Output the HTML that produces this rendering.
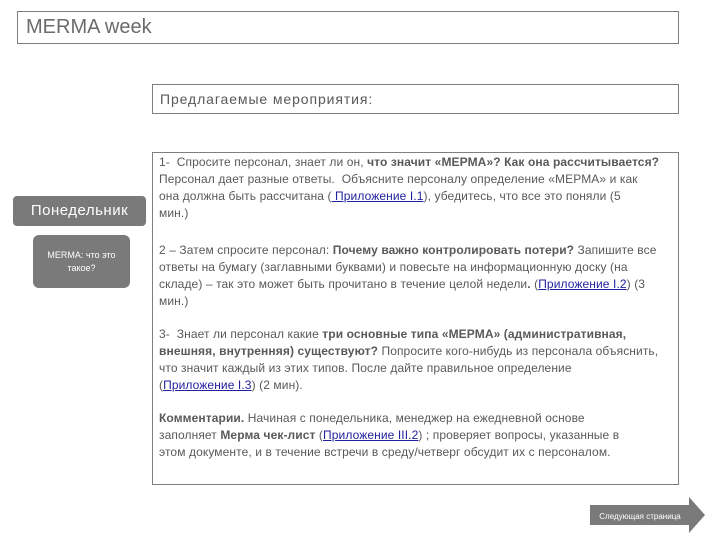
<!DOCTYPE html>
<html><head><meta charset="utf-8"><style>
body{margin:0;width:720px;height:540px;background:#fff;position:relative;overflow:hidden;font-family:"Liberation Sans","DejaVu Sans",sans-serif;color:#595959}
.box{position:absolute;border:1px solid #7f7f7f;box-sizing:border-box}
.t{position:absolute;left:159px;font-size:12px;line-height:17px;white-space:nowrap;letter-spacing:0.1px}
a{color:#1f1f9f;text-decoration:underline}
b{color:#595959}
</style></head><body>
<div class="box" style="left:17px;top:11px;width:662px;height:33px;font-size:20px;line-height:31px;padding-left:8px;color:#6b6b6b">MERMA week</div>
<div class="box" style="left:152px;top:84px;width:527px;height:30px;font-size:14px;line-height:28px;padding-left:7px;color:#595959;letter-spacing:0.9px">Предлагаемые мероприятия:</div>
<div class="box" style="left:152px;top:152px;width:527px;height:333px"></div>
<div style="position:absolute;left:13px;top:196px;width:133px;height:30px;background:#7a7a7a;border-radius:4px;color:#fff;font-size:15px;line-height:30px;text-align:center;letter-spacing:0.5px">Понедельник</div>
<div style="position:absolute;left:33px;top:235px;width:97px;height:53px;background:#7a7a7a;border-radius:6px;color:#fff;font-size:9px;line-height:13px;text-align:center;padding-top:14px;box-sizing:border-box">MERMA: что это<br>такое?</div>
<div class="t" style="top:154px">1- &nbsp;Спросите персонал, знает ли он, <b>что значит «МЕРМА»? Как она рассчитывается?</b><br>Персонал дает разные ответы. &nbsp;Объясните персоналу определение «МЕРМА» и как<br>она должна быть рассчитана (<a> Приложение I.1</a>), убедитесь, что все это поняли (5<br>мин.)</div>
<div class="t" style="top:242px">2 – Затем спросите персонал: <b>Почему важно контролировать потери?</b> Запишите все<br>ответы на бумагу (заглавными буквами) и повесьте на информационную доску (на<br>складе) – так это может быть прочитано в течение целой недели<b>.</b> (<a>Приложение I.2</a>) (3<br>мин.)</div>
<div class="t" style="top:326px">3- &nbsp;Знает ли персонал какие <b>три основные типа «МЕРМА» (административная,</b><br><b>внешняя, внутренняя) существуют?</b> Попросите кого-нибудь из персонала объяснить,<br>что значит каждый из этих типов. После дайте правильное определение<br>(<a>Приложение I.3</a>) (2 мин).</div>
<div class="t" style="top:410px"><b>Комментарии.</b> Начиная с понедельника, менеджер на ежедневной основе<br>заполняет <b>Мерма чек-лист</b> (<a>Приложение III.2</a>) ; проверяет вопросы, указанные в<br>этом документе, и в течение встречи в среду/четверг обсудит их с персоналом.</div>
<svg style="position:absolute;left:588px;top:496px" width="120" height="38"><polygon points="2,9 101,9 101,1 117,19 101,37 101,29 2,29" fill="#7a7a7a"/><text x="52" y="23" font-size="8" fill="#fff" text-anchor="middle" font-family="Liberation Sans, sans-serif">Следующая страница</text></svg>
</body></html>
